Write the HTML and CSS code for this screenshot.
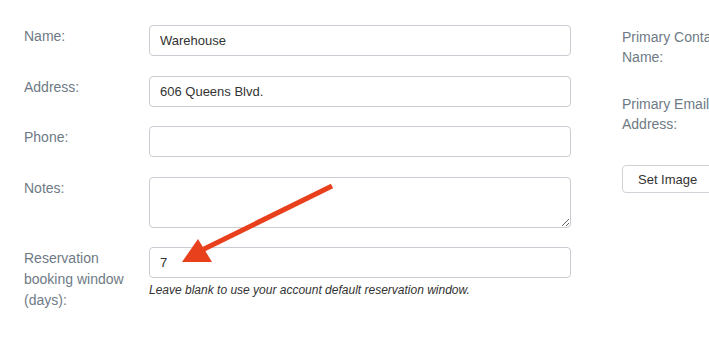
FILE: index.html
```html
<!DOCTYPE html>
<html lang="en">
<head>
    <meta charset="UTF-8">
    <meta name="viewport" content="width=device-width, initial-scale=1.0">
    <title>Edit Location</title>
    <link rel="stylesheet" href="styles.css">
</head>
<body>

    <main class="page">
        <form class="location-form">

            <div class="col-left">
                <div class="field">
                    <label class="field-label">Name:</label>
                    <div class="field-control">
                        <input class="text-input" type="text" value="Warehouse">
                    </div>
                </div>

                <div class="field">
                    <label class="field-label">Address:</label>
                    <div class="field-control">
                        <input class="text-input" type="text" value="606 Queens Blvd.">
                    </div>
                </div>

                <div class="field">
                    <label class="field-label">Phone:</label>
                    <div class="field-control">
                        <input class="text-input" type="text" value="">
                    </div>
                </div>

                <div class="field">
                    <label class="field-label">Notes:</label>
                    <div class="field-control">
                        <textarea class="text-area"></textarea>
                    </div>
                </div>

                <div class="field field-last">
                    <label class="field-label">Reservation booking window (days):</label>
                    <div class="field-control">
                        <input class="text-input" type="text" value="7">
                        <p class="hint">Leave blank to use your account default reservation window.</p>
                    </div>
                </div>
            </div>

            <div class="col-right">
                <div class="side-field">
                    <label class="side-label">Primary Contact<br>Name:</label>
                </div>
                <div class="side-field">
                    <label class="side-label">Primary Email<br>Address:</label>
                </div>
                <button class="image-button" type="button">Set Image</button>
            </div>

        </form>

        <svg class="callout-arrow" width="709" height="342" viewBox="0 0 709 342">
            <line x1="332" y1="186" x2="200" y2="251" stroke="#e8401c" stroke-width="5" />
            <polygon points="182,262 198,239 212,262" fill="#e8401c" />
        </svg>
    </main>

</body>
</html>
```

FILE: styles.css
```css
* {
    margin: 0;
    padding: 0;
    box-sizing: border-box;
}

body {
    font-family: "Liberation Sans", Arial, sans-serif;
    background-color: #fff;
    color: #333;
    overflow: hidden;
}

.page {
    position: relative;
    width: 709px;
    height: 342px;
}

.location-form {
    display: flex;
    gap: 51px;
    padding: 25px 0 0 24px;
}

.col-left {
    width: 547px;
    flex-shrink: 0;
}

.field {
    display: flex;
    margin-bottom: 19.5px;
}

.field-label {
    width: 125px;
    flex-shrink: 0;
    padding: 1px 20px 0 0;
    font-size: 14px;
    line-height: 21px;
    color: #6e7a85;
}

.field-control {
    width: 422px;
}

.text-input {
    display: block;
    width: 100%;
    height: 31px;
    padding: 0 10px;
    border: 1px solid #c9cdd3;
    border-radius: 4px;
    font-family: inherit;
    font-size: 13px;
    color: #333;
    background: #fff;
}

.text-area {
    display: block;
    width: 100%;
    height: 51px;
    padding: 6px 10px;
    border: 1px solid #c9cdd3;
    border-radius: 4px;
    font-family: inherit;
    font-size: 13px;
    resize: vertical;
}

.hint {
    margin-top: 5px;
    font-size: 12px;
    font-style: italic;
    color: #333;
}

.col-right {
    width: 110px;
    flex-shrink: 0;
}

.side-field {
    height: 67px;
    padding-top: 2px;
}

.side-label {
    display: block;
    white-space: nowrap;
    font-size: 14px;
    line-height: 20px;
    color: #6e7a85;
}

.image-button {
    display: block;
    margin-top: 6px;
    width: 110px;
    height: 28px;
    padding: 0 0 0 15px;
    text-align: left;
    border: 1px solid #cfd3d8;
    border-radius: 4px;
    background: #fff;
    font-family: inherit;
    font-size: 13px;
    color: #333;
}

.callout-arrow {
    position: absolute;
    left: 0;
    top: 0;
    pointer-events: none;
}
```
